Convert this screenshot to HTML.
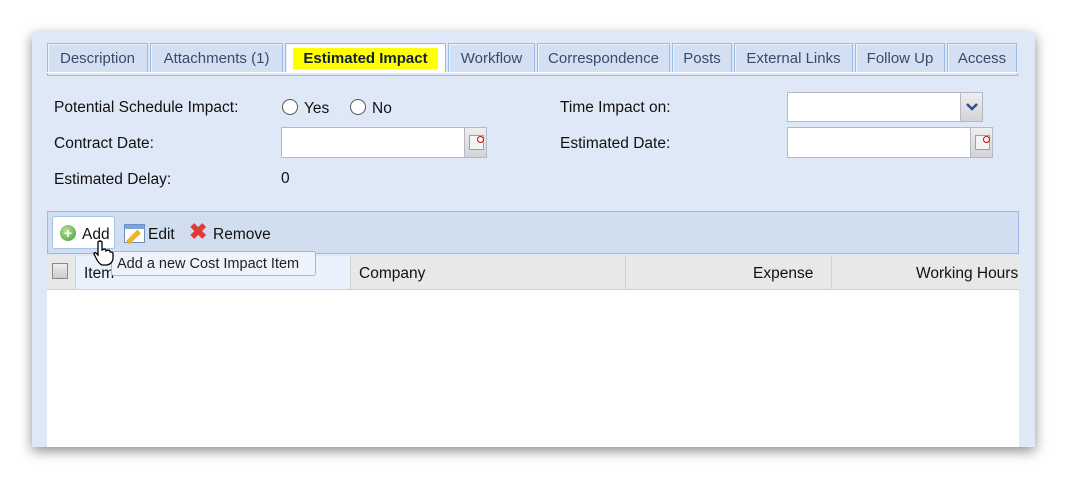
<!DOCTYPE html><html><head><style>
body{margin:0;width:1067px;height:479px;background:#fff;position:relative;overflow:hidden;font-family:"Liberation Sans",sans-serif;font-size:15px;color:#222}
.p{position:absolute;left:32px;top:32px;width:1003px;height:415px;background:#dfe8f6;box-shadow:0 4px 12px rgba(0,0,0,.45)}
.a{position:absolute}
.tab{position:absolute;top:43px;height:29px;background:#d3e0f3;border:1px solid #99bbe8;border-bottom:none;color:#3a4a6a;text-align:center;line-height:30px;box-sizing:border-box;box-shadow:inset 1px 1px 0 #eef3fb}
.lbl{position:absolute;color:#111;font-size:15.5px}
.in{position:absolute;background:#fff;border:1px solid #b5b8c8;box-sizing:border-box;height:31px}
.btn{position:absolute;width:23px;height:31px;background:linear-gradient(#eee,#d4d4d4);border:1px solid #b5b8c8;box-sizing:border-box}
.rad{display:inline-block;width:14px;height:14px;border:1px solid #555;border-radius:50%;vertical-align:-2px;margin-right:6px;background:#fff}
</style></head><body>
<div class="p"></div>
<div class="tab" style="left:47px;width:101px">Description</div>
<div class="tab" style="left:150px;width:133px">Attachments (1)</div>
<div class="tab" style="left:285px;width:161px;background:#fff;height:31px"><span style="background:#ffff00;font-weight:bold;color:#123;padding:2px 10px">Estimated Impact</span></div>
<div class="tab" style="left:448px;width:87px">Workflow</div>
<div class="tab" style="left:537px;width:133px">Correspondence</div>
<div class="tab" style="left:672px;width:60px">Posts</div>
<div class="tab" style="left:734px;width:119px">External Links</div>
<div class="tab" style="left:855px;width:90px">Follow Up</div>
<div class="tab" style="left:947px;width:70px">Access</div>
<div class="a" style="left:47px;top:72px;width:971px;height:4px;border:1px solid #99bbe8;border-top:none;box-sizing:border-box;background:#dfe8f6"></div>
<div class="a" style="left:47px;top:72px;width:971px;height:1px;background:#fff"></div>
<div class="lbl" style="left:54px;top:99px">Potential Schedule Impact:</div>
<div class="lbl" style="left:282px;top:99px"><span class="rad"></span>Yes</div>
<div class="lbl" style="left:350px;top:99px"><span class="rad"></span>No</div>
<div class="lbl" style="left:54px;top:135px">Contract Date:</div>
<div class="in" style="left:281px;top:127px;width:184px"></div><div class="btn" style="left:464px;top:127px"><div class="a" style="left:4px;top:7px;width:13px;height:13px;border:1px solid #8aa;background:#f4f4f4"></div><div class="a" style="left:12px;top:8px;width:5px;height:5px;border-radius:50%;border:1px solid #c00;background:#fff"></div></div>
<div class="lbl" style="left:54px;top:171px">Estimated Delay:</div>
<div class="lbl" style="left:281px;top:170px">0</div>
<div class="lbl" style="left:560px;top:99px">Time Impact on:</div>
<div class="in" style="left:787px;top:92px;width:174px;height:30px"></div><div class="btn" style="left:960px;top:92px;height:30px"><svg class="a" style="left:5px;top:10px" width="12" height="8"><path d="M1 1 L6 6 L11 1" stroke="#2a4f8a" stroke-width="2.5" fill="none"/></svg></div>
<div class="lbl" style="left:560px;top:135px">Estimated Date:</div>
<div class="in" style="left:787px;top:127px;width:184px"></div><div class="btn" style="left:970px;top:127px"><div class="a" style="left:4px;top:7px;width:13px;height:13px;border:1px solid #8aa;background:#f4f4f4"></div><div class="a" style="left:12px;top:8px;width:5px;height:5px;border-radius:50%;border:1px solid #c00;background:#fff"></div></div>
<div class="a" style="left:47px;top:211px;width:972px;height:43px;background:#d0def0;border:1px solid #99bbe8;box-sizing:border-box"></div>
<div class="a" style="left:52px;top:216px;width:63px;height:33px;background:#fff;border:1px solid #a8c3e8;border-radius:3px;box-sizing:border-box"></div>
<div class="a" style="left:60px;top:225px;width:16px;height:16px;border-radius:50%;background:radial-gradient(circle at 40% 35%,#b6e39a,#3f9a2c);color:#fff;font-size:14px;font-weight:bold;line-height:16px;text-align:center">+</div>
<div class="lbl" style="left:82px;top:226px">Add</div>
<div class="a" style="left:124px;top:224px;width:19px;height:17px;border:1px solid #6a8fc0;background:linear-gradient(#7aa6e0 0 4px,#fff 4px)"></div>
<div class="a" style="left:131px;top:229px;width:5px;height:16px;background:#f0b030;transform:rotate(45deg)"></div>
<div class="lbl" style="left:148px;top:226px">Edit</div>
<div class="a" style="left:189px;top:219px;font-size:22px;color:#e03b3b;font-weight:bold">✖</div>
<div class="lbl" style="left:213px;top:226px">Remove</div>
<div class="a" style="left:47px;top:256px;width:972px;height:34px;background:#e8e8e8;border-bottom:1px solid #d0d0d0;box-sizing:border-box"></div>
<div class="a" style="left:52px;top:263px;width:14px;height:14px;border:1px solid #888;background:linear-gradient(#eee,#ccc)"></div>
<div class="a" style="left:75px;top:256px;width:275px;height:33px;background:#e8f1fc;border-left:1px solid #d0d0d0"></div>
<div class="lbl" style="left:84px;top:265px">Item</div>
<div class="a" style="left:625px;top:256px;width:1px;height:33px;background:#d0d0d0"></div>
<div class="a" style="left:831px;top:256px;width:1px;height:33px;background:#d0d0d0"></div>
<div class="a" style="left:350px;top:256px;width:1px;height:33px;background:#d0d0d0"></div>
<div class="lbl" style="left:359px;top:265px">Company</div>
<div class="lbl" style="left:753px;top:265px">Expense</div>
<div class="lbl" style="left:916px;top:265px">Working Hours</div>
<div class="a" style="left:47px;top:290px;width:972px;height:157px;background:#fff"></div>
<div class="a" style="left:111px;top:251px;width:205px;height:25px;background:#eef3fb;border:1px solid #99bbe8;border-radius:3px;box-sizing:border-box;font-size:14.5px;line-height:24px;padding-left:5px;color:#222">Add a new Cost Impact Item</div>
<svg class="a" style="left:92px;top:240px" width="22" height="26"><path d="M6 2 Q8 0 10 2 L10 10 L12 9 Q14 9 14 11 L16 10 Q18 10 18 12 L19 12 Q21 12 21 14 L21 19 Q20 24 15 25 L10 25 Q7 24 4 18 L2 14 Q2 12 4 13 L6 15 Z" fill="#fff" stroke="#000" stroke-width="1.3"/></svg>
</body></html>
